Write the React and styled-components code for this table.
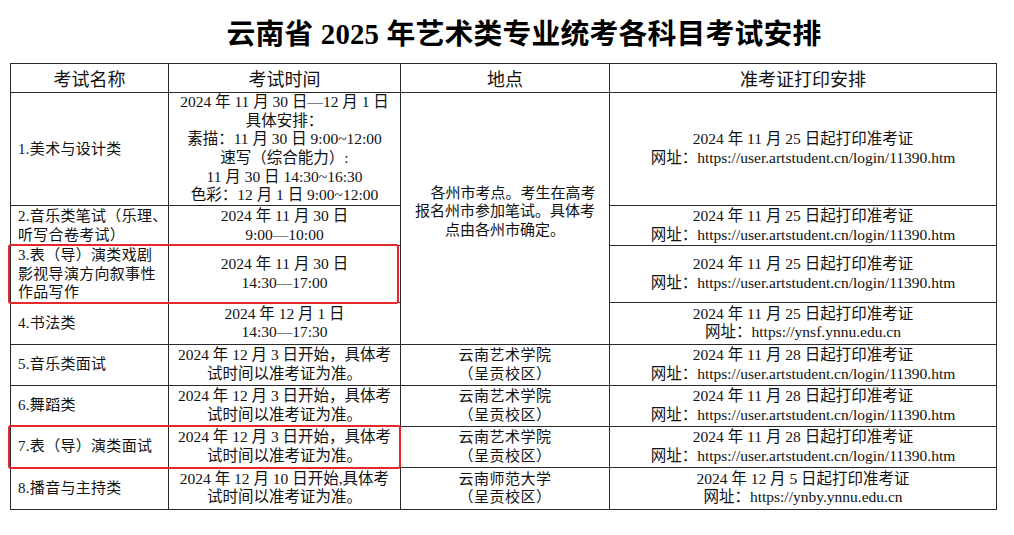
import React from "react";
import styled, { createGlobalStyle } from "styled-components";

const GlobalStyle = createGlobalStyle`
  html, body {
    margin: 0;
    padding: 0;
    background: #fff;
  }
  body {
    font-family: "Liberation Serif", "Noto Sans CJK SC", serif;
    color: #111;
  }
`;

const Page = styled.div`
  width: 1014px;
  height: 535px;
  overflow: hidden;
`;

const Title = styled.h1`
  margin: 0;
  height: 63px;
  display: flex;
  align-items: center;
  justify-content: center;
  padding-left: 34px;
  box-sizing: border-box;
  font-family: "Liberation Serif", "Noto Sans CJK SC", serif;
  font-size: 28.8px;
  font-weight: 700;
  color: #000;
  letter-spacing: 0.2px;
`;

const Table = styled.table`
  margin-left: 10px;
  width: 987px;
  border-collapse: collapse;
  table-layout: fixed;
`;

const Row = styled.tr`
  height: ${(props) => props.h}px;
`;

const Th = styled.th`
  border: 1px solid #2a2a2a;
  font-family: "Noto Sans CJK SC", sans-serif;
  font-size: 18px;
  font-weight: 400;
  color: #111;
  padding: 0;
  line-height: 26px;
  text-align: center;
`;

const Td = styled.td`
  position: relative;
  border: 1px solid #2a2a2a;
  padding: 0 0 ${(props) => props.pb || 0}px ${(props) => props.pl || 0}px;
  font-size: ${(props) => props.fs || 15.5}px;
  letter-spacing: ${(props) => props.ls || 0}px;
  line-height: 18.6px;
  text-align: ${(props) => props.align || "center"};
  vertical-align: middle;
  white-space: nowrap;
`;

const Line = styled.span`
  display: block;
  padding-left: ${(props) => props.indent || 0}px;
`;

const Highlight = styled.div`
  position: absolute;
  top: -2px;
  bottom: -2px;
  left: -3px;
  width: ${(props) => props.w}px;
  border: 2px solid #e4282c;
  border-radius: 3px;
  box-sizing: border-box;
  pointer-events: none;
`;

const ART = "网址：https://user.artstudent.cn/login/11390.htm";
const LATER = ["2024 年 12 月 3 日开始，具体考", "试时间以准考证为准。"];
const YNYS = ["云南艺术学院", "（呈贡校区）"];

const rows = [
  {
    h: 113,
    name: ["1.美术与设计类"],
    time: [
      "2024 年 11 月 30 日—12 月 1 日",
      "具体安排：",
      "素描：11 月 30 日 9:00~12:00",
      "速写（综合能力）:",
      "11 月 30 日 14:30~16:30",
      "色彩：12 月 1 日 9:00~12:00",
    ],
    place: "county",
    print: ["2024 年 11 月 25 日起打印准考证", ART],
  },
  {
    h: 40,
    name: ["2.音乐类笔试（乐理、", "听写合卷考试）"],
    time: ["2024 年 11 月 30 日", "9:00—10:00"],
    print: ["2024 年 11 月 25 日起打印准考证", ART],
  },
  {
    h: 56,
    name: ["3.表（导）演类戏剧", "影视导演方向叙事性", "作品写作"],
    time: ["2024 年 11 月 30 日", "14:30—17:00"],
    print: ["2024 年 11 月 25 日起打印准考证", ART],
    mark: 391,
  },
  {
    h: 42,
    name: ["4.书法类"],
    time: ["2024 年 12 月 1 日", "14:30—17:30"],
    print: ["2024 年 11 月 25 日起打印准考证", "网址：https://ynsf.ynnu.edu.cn"],
  },
  {
    h: 41,
    name: ["5.音乐类面试"],
    time: LATER,
    place: YNYS,
    print: ["2024 年 11 月 28 日起打印准考证", ART],
  },
  {
    h: 41,
    name: ["6.舞蹈类"],
    time: LATER,
    place: YNYS,
    print: ["2024 年 11 月 28 日起打印准考证", ART],
  },
  {
    h: 41,
    name: ["7.表（导）演类面试"],
    time: LATER,
    place: YNYS,
    print: ["2024 年 11 月 28 日起打印准考证", ART],
    mark: 393,
  },
  {
    h: 42,
    name: ["8.播音与主持类"],
    time: ["2024 年 12 月 10 日开始,具体考", "试时间以准考证为准。"],
    place: ["云南师范大学", "（呈贡校区）"],
    print: ["2024 年 12 月 5 日起打印准考证", "网址：https://ynby.ynnu.edu.cn"],
  },
];

const Lines = ({ items }) =>
  items.map((text, i) => <Line key={i}>{text}</Line>);

export default function App() {
  return (
    <Page>
      <GlobalStyle />
      <Title>云南省 2025 年艺术类专业统考各科目考试安排</Title>
      <Table>
        <colgroup>
          <col style={{ width: 158 }} />
          <col style={{ width: 232 }} />
          <col style={{ width: 209 }} />
          <col style={{ width: 387 }} />
        </colgroup>
        <thead>
          <Row h={29}>
            <Th>考试名称</Th>
            <Th>考试时间</Th>
            <Th>地点</Th>
            <Th>准考证打印安排</Th>
          </Row>
        </thead>
        <tbody>
          {rows.map((row, i) => (
            <Row key={i} h={row.h}>
              <Td align="left" pl={7} fs={15} ls={0.3}>
                {row.mark && <Highlight w={row.mark} />}
                <Lines items={row.name} />
              </Td>
              <Td>
                <Lines items={row.time} />
              </Td>
              {row.place === "county" && (
                <Td rowSpan={4} fs={15} pb={14}>
                  <Line indent={16}>各州市考点。考生在高考</Line>
                  <Line>报名州市参加笔试。具体考</Line>
                  <Line>点由各州市确定。</Line>
                </Td>
              )}
              {Array.isArray(row.place) && (
                <Td fs={15} ls={0.5}>
                  <Lines items={row.place} />
                </Td>
              )}
              <Td>
                <Lines items={row.print} />
              </Td>
            </Row>
          ))}
        </tbody>
      </Table>
    </Page>
  );
}
